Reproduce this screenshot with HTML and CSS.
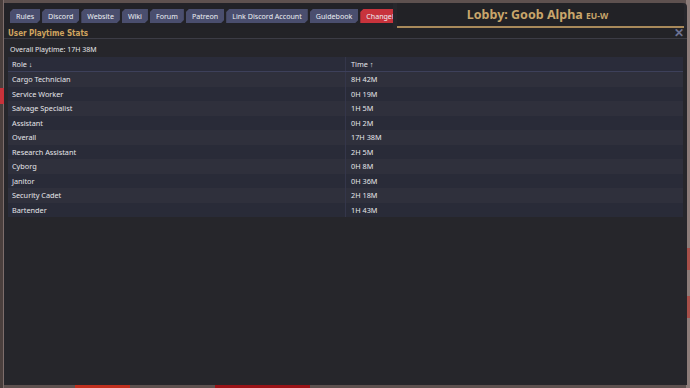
FILE: index.html
```html
<!DOCTYPE html>
<html lang="en">
<head>
  <meta charset="UTF-8">
  <title>User Playtime Stats</title>
  <link rel="stylesheet" href="styles.css">
</head>
<body>

  <div class="window">
    <div class="topbar">
      <nav class="links">
        <span class="tab">Rules</span>
        <span class="tab">Discord</span>
        <span class="tab">Website</span>
        <span class="tab">Wiki</span>
        <span class="tab">Forum</span>
        <span class="tab">Patreon</span>
        <span class="tab">Link Discord Account</span>
        <span class="tab">Guidebook</span>
        <span class="tab red">Changelog</span>
      </nav>
      <div class="lobby">
        <div class="lobby-title">Lobby: Goob Alpha <span class="region">EU-W</span></div>
      </div>
    </div>

    <div class="popup-head">
      <span class="popup-title">User Playtime Stats</span>
      <span class="close">&#x2715;</span>
    </div>

    <div class="popup-body">
      <p class="overall">Overall Playtime: 17H 38M</p>
      <table class="stats">
        <thead>
          <tr><th>Role ↓</th><th>Time ↑</th></tr>
        </thead>
        <tbody>
          <tr><td>Cargo Technician</td><td>8H 42M</td></tr>
          <tr><td>Service Worker</td><td>0H 19M</td></tr>
          <tr><td>Salvage Specialist</td><td>1H 5M</td></tr>
          <tr><td>Assistant</td><td>0H 2M</td></tr>
          <tr><td>Overall</td><td>17H 38M</td></tr>
          <tr><td>Research Assistant</td><td>2H 5M</td></tr>
          <tr><td>Cyborg</td><td>0H 8M</td></tr>
          <tr><td>Janitor</td><td>0H 36M</td></tr>
          <tr><td>Security Cadet</td><td>2H 18M</td></tr>
          <tr><td>Bartender</td><td>1H 43M</td></tr>
        </tbody>
      </table>
    </div>
  </div>

</body>
</html>
```

FILE: styles.css
```css
html, body { margin: 0; height: 100%; }
body {
  font-family: "Noto Sans", sans-serif;
  background:
    linear-gradient(#c8323a, #c8323a) 0 88px / 4px 16px no-repeat,
    linear-gradient(#a8504a, #a8504a) 687px 248px / 3px 22px no-repeat,
    linear-gradient(#a8504a, #a8504a) 687px 296px / 3px 22px no-repeat,
    linear-gradient(#c0301f, #c0301f) 75px 385px / 55px 3px no-repeat,
    linear-gradient(#9a1418, #9a1418) 215px 385px / 95px 3px no-repeat,
    linear-gradient(90deg, #4a3f3d 0 3px, #7d6d6b 3px 4px, transparent 4px 686px, #8c7c79 686px),
    #5e514f;
  overflow: hidden;
}

.window {
  margin: 3px 3px 0 4px;
  height: 382px;
  background: #26262b;
  border-top-right-radius: 4px;
  display: flex;
  flex-direction: column;
}

/* top bar: link tabs + lobby title */
.topbar { display: flex; height: 25px; }
.links {
  width: 383px;
  padding: 6px 0 0 6px;
  display: flex;
  gap: 2px;
  overflow: hidden;
  white-space: nowrap;
  background: #222227;
}
.tab {
  flex: none;
  height: 14px;
  line-height: 14px;
  padding: 0 6px;
  font-size: 7.1px;
  color: #eceef4;
  background: #4a4e6e;
  clip-path: polygon(3px 0, 100% 0, 100% calc(100% - 3px), calc(100% - 3px) 100%, 0 100%, 0 3px);
}
.tab.red { background: #c8333c; }

.lobby {
  flex: 1;
  background: #222226;
  border-top-right-radius: 4px;
  border-bottom: 2px solid #a8895a;
  margin-left: 4px;
  margin-right: 3px;
  display: flex;
  align-items: center;
  justify-content: center;
  padding-right: 6px;
}
.lobby-title { font-size: 12.5px; font-weight: bold; color: #c9a66b; }
.region { font-size: 8.5px; }

/* popup */
.popup-head {
  height: 10px;
  display: flex;
  align-items: center;
  justify-content: space-between;
  padding: 0 3px 0 4px;
  border-bottom: 1px solid #3c3c45;
  background: #232327;
}
.popup-title {
  font-family: "DejaVu Sans Condensed", "DejaVu Sans", sans-serif;
  font-stretch: condensed;
  font-weight: bold;
  font-size: 8px;
  color: #d0a45f;
}
.close { font-size: 12px; line-height: 10px; color: #6c7192; font-weight: bold; }

.popup-body { padding: 4px 4px 0; }
.overall { margin: 0; height: 14px; line-height: 14px; font-size: 7px; color: #e6e6ea; padding-left: 2px; }

.stats { width: 100%; border-collapse: collapse; font-size: 7.3px; color: #e6e6ea; }
.stats th, .stats td { text-align: left; font-weight: normal; padding: 0 0 0 4px; width: 50%; }
.stats th { height: 14px; background: #2a2c3a; border-bottom: 1px solid #3d405a; }
.stats th + th, .stats td + td { border-left: 1px solid #34364a; padding-left: 5px; }
.stats td { height: 14.5px; }
.stats tbody tr:nth-child(odd) { background: #2f303c; }
.stats tbody tr:nth-child(even) { background: #292b38; }
```
